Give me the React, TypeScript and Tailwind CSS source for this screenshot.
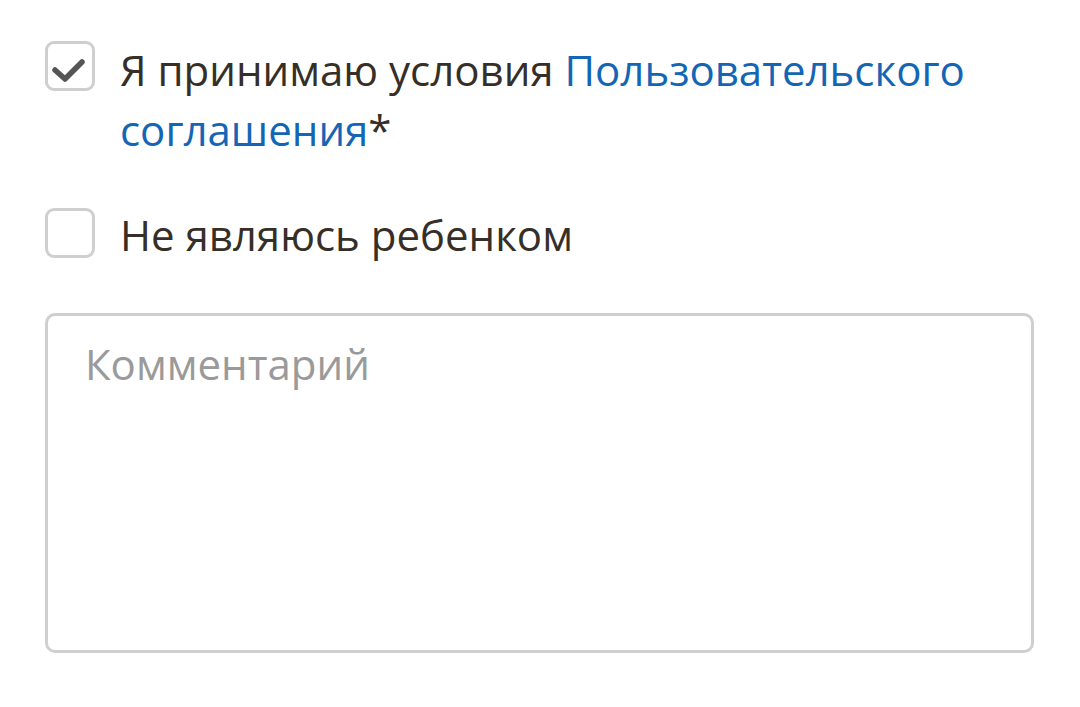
import React from "react";

function Box({ checked }: { checked?: boolean }) {
  return (
    <div className="w-[50px] h-[50px] shrink-0 rounded-[9px] border-[3px] border-[#cfcfcf] bg-white relative">
      {checked && (
        <svg className="absolute left-[-3px] top-[-3px]" width="50" height="50" viewBox="0 0 50 50">
          <path d="M10 29 L20 38 L37 21" fill="none" stroke="#555555" strokeWidth="5.5" strokeLinecap="round" strokeLinejoin="round" />
        </svg>
      )}
    </div>
  );
}

export default function App() {
  return (
    <div className="w-[1080px] h-[707px] bg-white font-['Open_Sans',sans-serif] pl-[45px] pt-[41px] text-[#352f28]">
      <div className="flex items-start gap-[25px] w-[989px]">
        <Box checked />
        <div className="text-[42px] leading-[60px] -mt-[1px]">
          Я принимаю условия{" "}
          <span className="text-[#1466b5]">Пользовательского соглашения</span>*
        </div>
      </div>
      <div className="flex items-start gap-[25px] w-[989px] mt-[48px]">
        <Box />
        <div className="text-[42px] leading-[60px] -mt-[3px]">Не являюсь ребенком</div>
      </div>
      <textarea
        className="block mt-[48px] w-[989px] h-[340px] rounded-[10px] border-[3px] border-[#cfcfcf] bg-white px-[37px] pt-[21px] text-[42px] leading-[54px] text-[#352f28] placeholder:text-[#9a9a9a] resize-none outline-none font-['Open_Sans',sans-serif]"
        placeholder="Комментарий"
      />
    </div>
  );
}
